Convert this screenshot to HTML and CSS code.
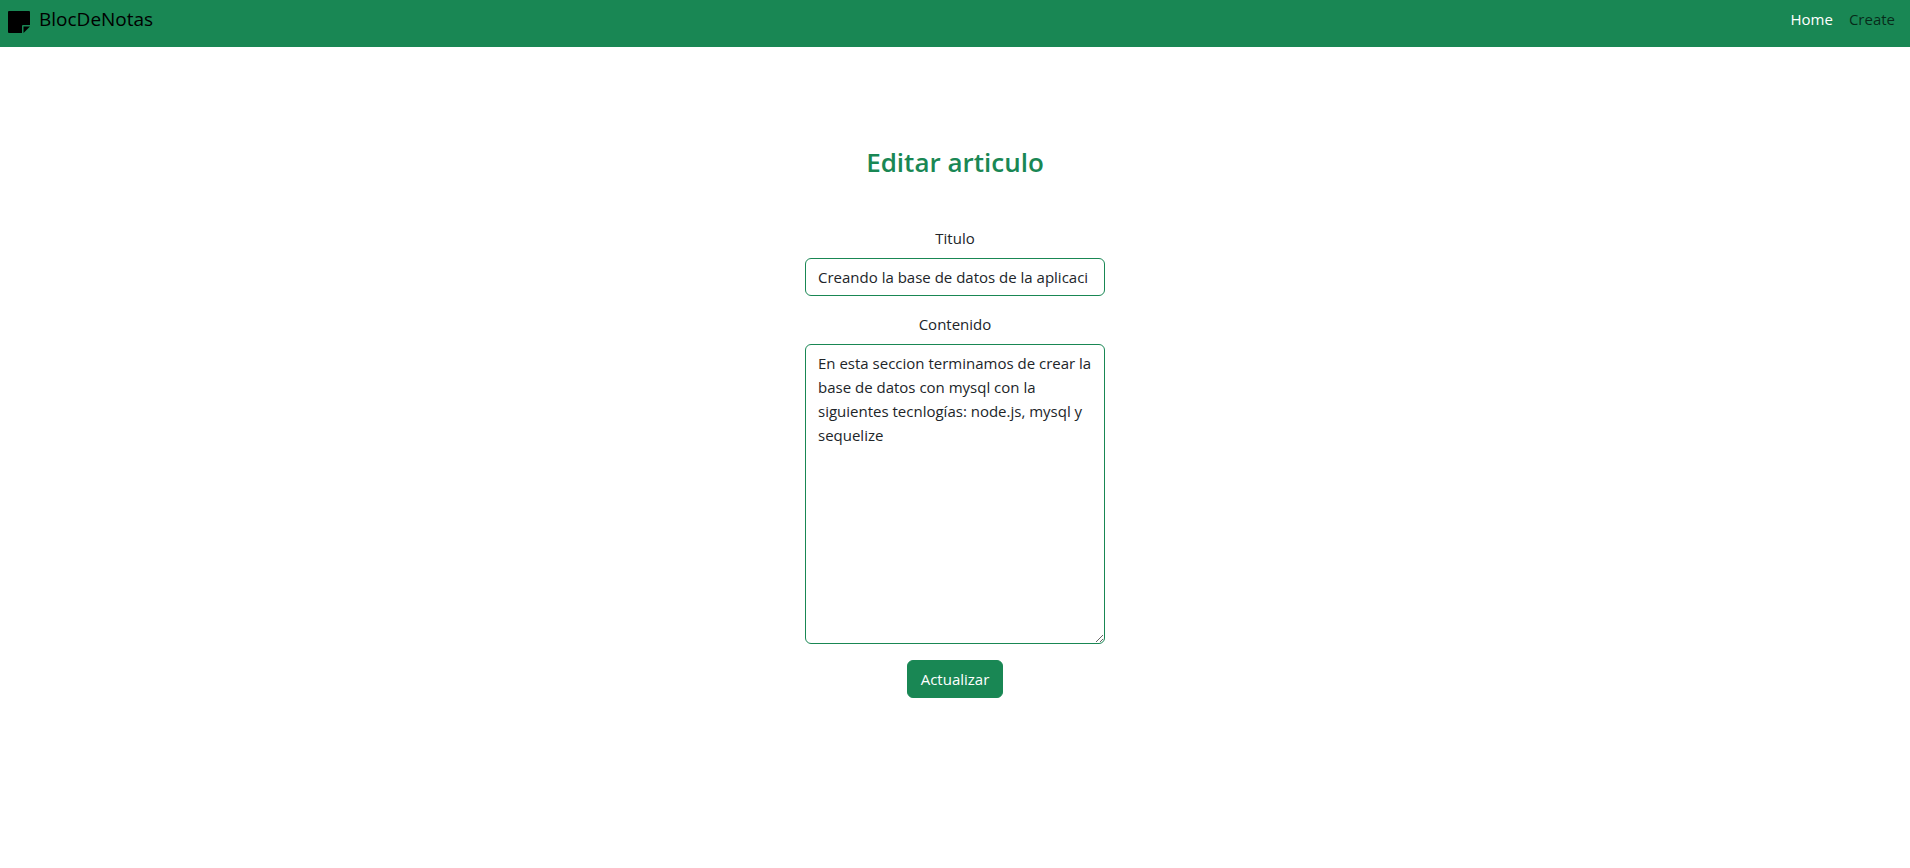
FILE: index.html
```html
<!DOCTYPE html>
<html lang="es">
<head>
<meta charset="utf-8">
<meta name="viewport" content="width=device-width, initial-scale=1">
<title>BlocDeNotas</title>
<link rel="stylesheet" href="styles.css">
</head>
<body>
<nav class="navbar">
  <a class="brand" href="#">
    <svg class="brand-icon" viewBox="0 0 22 22" aria-hidden="true">
      <path d="M1 0H21Q22 0 22 1V14H15Q14 14 14 15V22H1Q0 22 0 21V1Q0 0 1 0Z"/>
      <path d="M15.500 15.500H22L15.500 22Z"/>
    </svg>
    <span>BlocDeNotas</span>
  </a>
  <div class="nav-links">
    <a class="nav-link active" href="#">Home</a>
    <a class="nav-link" href="#">Create</a>
  </div>
</nav>
<main class="page">
  <h2 class="title">Editar articulo</h2>
  <form class="form">
    <div class="field">
      <label class="label" for="titulo">Titulo</label>
      <input class="control" id="titulo" type="text" value="Creando la base de datos de la aplicaci">
    </div>
    <div class="field">
      <label class="label" for="contenido">Contenido</label>
      <textarea class="control area" id="contenido">En esta seccion terminamos de crear la base de datos con mysql con la siguientes tecnlogías: node.js, mysql y sequelize</textarea>
    </div>
    <button class="button" type="button">Actualizar</button>
  </form>
</main>
</body>
</html>
```
FILE: styles.css
```css
* {
  box-sizing: border-box;
}

body {
  margin: 0;
  background: #fff;
  color: #212529;
  font-family: "Segoe UI", "Open Sans", "Noto Sans", sans-serif;
  font-size: 15px;
  line-height: 24px;
}

.navbar {
  display: flex;
  align-items: flex-start;
  justify-content: space-between;
  min-height: 47px;
  padding: 7px 15px 8px 8px;
  background: #198754;
}

.brand {
  display: flex;
  gap: 9px;
  color: #000;
  font-size: 19px;
  text-decoration: none;
}

.brand-icon {
  width: 22px;
  height: 22px;
  margin-top: 4px;
}

.nav-links {
  display: flex;
  gap: 16px;
}

.nav-link {
  color: rgba(0, 0, 0, 0.7);
  text-decoration: none;
}

.nav-link.active {
  color: #fff;
}

.page {
  display: flex;
  flex-direction: column;
  align-items: center;
  padding: 96px 16px;
}

.title {
  margin: 0 0 45px;
  color: #198754;
  font-size: 26px;
  font-weight: 600;
  line-height: 38px;
}

.form {
  display: flex;
  flex-direction: column;
  align-items: center;
  gap: 16px;
  width: 100%;
  max-width: 300px;
}

.field {
  display: flex;
  flex-direction: column;
  gap: 8px;
  width: 100%;
}

.label {
  text-align: center;
}

.control {
  display: block;
  width: 100%;
  height: 38px;
  margin: 0;
  padding: 6px 12px;
  border: 1px solid #198754;
  border-radius: 6px;
  background: #fff;
  color: #212529;
  font: inherit;
}

.area {
  height: 300px;
  resize: both;
}

.button {
  padding: 6px 13px;
  border: 1px solid #198754;
  border-radius: 6px;
  background: #198754;
  color: #fff;
  font: inherit;
}
```
